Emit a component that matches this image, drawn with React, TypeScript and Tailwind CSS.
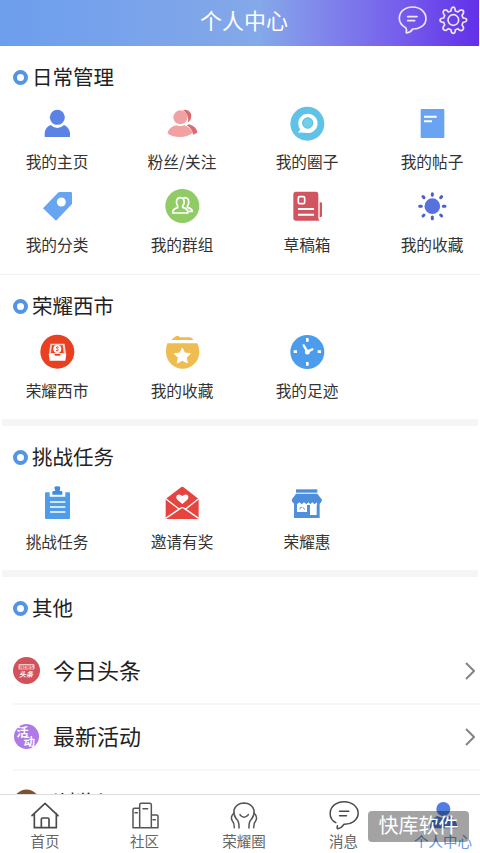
import type { ReactNode } from "react";

type Item = { label: string; icon: ReactNode };

function Icon({ box, children }: { box: string; children: ReactNode }) {
  return (
    <svg viewBox={box} className="block h-9 w-9 shrink-0 overflow-visible" fill="none">
      {children}
    </svg>
  );
}

const daily: Item[] = [
  {
    label: "我的主页",
    icon: (
      <Icon box="117 30 108 108">
        <g fill="#5b83e6">
          <circle cx="172" cy="67" r="22.5" />
          <path d="M134 126V113Q136 97 152 90Q161 99 172 99T192 90Q207 97 210 113V126Z" />
        </g>
      </Icon>
    ),
  },
  {
    label: "粉丝/关注",
    icon: (
      <Icon box="492 30 108 108">
        <g fill="#dc6a6e">
          <path d="M549 45Q566 42 573 56Q577 72 564 82Q567 58 549 45Z" />
          <path d="M568 88Q590 95 592 113L579 119Q577 101 560 91Z" />
        </g>
        <g fill="#f0a2a2">
          <ellipse cx="541" cy="67" rx="21" ry="21" />
          <path d="M502 114Q508 96 529 91Q541 96 553 91Q571 97 578 113Q562 126 540 126Q514 126 502 114Z" />
        </g>
      </Icon>
    ),
  },
  {
    label: "我的圈子",
    icon: (
      <Icon box="147 30 108 108">
        <circle cx="202" cy="86" r="51" fill="#60c2e8" />
        <path d="M174 113L181 103A29 29 0 1 1 203 114Q190 112 174 113Z" fill="#fff" />
        <circle cx="203" cy="84" r="17" fill="#72cdec" />
        <circle cx="203" cy="84" r="15" stroke="#59b9e0" strokeWidth="2" />
      </Icon>
    ),
  },
  {
    label: "我的帖子",
    icon: (
      <Icon box="522 30 108 108">
        <rect x="542" y="42" width="71" height="87" rx="3" fill="#6aa3f1" />
        <path d="M552 65H590M552 79H576" stroke="#fff" strokeWidth="6" />
      </Icon>
    ),
  },
  {
    label: "我的分类",
    icon: (
      <Icon box="117 280 108 108">
        <path d="M129 341L174 294Q176 292 180 292H213Q216 292 216 295V328L168 378Z" fill="#67a5f2" />
        <circle cx="184" cy="322" r="13.5" fill="#fff" />
      </Icon>
    ),
  },
  {
    label: "我的群组",
    icon: (
      <Icon box="492 280 108 108">
        <circle cx="547" cy="334" r="51" fill="#91cb66" />
        <g stroke="#fff" strokeWidth="5" strokeLinejoin="round" strokeLinecap="round">
          <path d="M533 334Q527 326 530 317Q533 309 541 309T552 317Q555 327 548 334V338Q565 343 564 355H518Q517 343 533 339Z" />
          <path d="M551 311Q557 306 564 313Q569 326 562 334V338Q577 342 577 350H568" />
        </g>
      </Icon>
    ),
  },
  {
    label: "草稿箱",
    icon: (
      <Icon box="147 280 108 108">
        <path d="M168 291H228Q235 291 235 298V371L238 378H168Q160 378 160 370V299Q160 291 168 291Z" fill="#d05560" />
        <path d="M239 323H242Q246 323 246 327V363Q246 368 239 368Z" fill="#d05560" />
        <rect x="175" y="306" width="19" height="21" rx="4" stroke="#fff" strokeWidth="5" />
        <path d="M174 343H222M174 360H222" stroke="#fff" strokeWidth="6" />
      </Icon>
    ),
  },
  {
    label: "我的收藏",
    icon: (
      <Icon box="522 280 108 108">
        <circle cx="577" cy="334.500" r="23.500" fill="#5572df" />
        <path
          d="M577 297V302M577 367V372M539 335H544M610 335H615M549 306L552 309M602 361L605 364M549 364L552 361M602 309L605 306"
          stroke="#4a5ed0"
          strokeWidth="9"
          strokeLinecap="round"
        />
      </Icon>
    ),
  },
];

const market: Item[] = [
  {
    label: "荣耀西市",
    icon: (
      <Icon box="117 222 108 108">
        <circle cx="172" cy="275" r="51" fill="#e84020" />
        <path d="M151 251H194L198 282H147Z" fill="#f9d2c5" />
        <path d="M156 256H188L191 279H153Z" fill="#e84020" />
        <path d="M146 281H162L166 287H179L183 281H199L196 302H149Z" fill="#fff" />
        <circle cx="172" cy="267" r="12" fill="#fff" />
        <path d="M176 262Q170 258 169 264L175 269Q175 274 168 272" stroke="#e84020" strokeWidth="3" />
      </Icon>
    ),
  },
  {
    label: "我的收藏",
    icon: (
      <Icon box="492 222 108 108">
        <path d="M514 240Q520 233 529 228H536L539 232H570Q577 234 581 240Z" fill="#eebc50" />
        <path d="M502 250H592Q598 262 598 276A50 50 0 0 1 498 276Q497 262 502 250Z" fill="#eebc50" />
        <path
          d="M547 264L554 279L571 281L559 293L562 309L547 301L532 309L535 293L523 281L540 279Z"
          fill="#fff"
          stroke="#fff"
          strokeWidth="3"
          strokeLinejoin="round"
        />
      </Icon>
    ),
  },
  {
    label: "我的足迹",
    icon: (
      <Icon box="147 132 108 108">
        <circle cx="202" cy="186" r="51" fill="#4b9cec" />
        <path d="M202 144V155M202 216V227M161 185H171M233 185H243" stroke="#fff" strokeWidth="8" />
        <path d="M191 166L202 185L217 178" stroke="#fff" strokeWidth="7" strokeLinecap="round" />
        <circle cx="202" cy="186" r="7.500" fill="#fff" />
      </Icon>
    ),
  },
];

const tasks: Item[] = [
  {
    label: "挑战任务",
    icon: (
      <Icon box="117 165 108 108">
        <path d="M138 187H149V200H196V187H207Q210 187 210 190V264Q210 267 207 267H138Q135 267 135 264V190Q135 187 138 187Z" fill="#4f9dea" />
        <path d="M163 173Q163 169 172 169T181 173L179 183H184Q187 183 187 187V194H157V187Q157 183 160 183H166Z" fill="#3f8de0" />
        <path d="M150 216H196M150 231H196M150 246H196" stroke="#fff" strokeWidth="5" />
      </Icon>
    ),
  },
  {
    label: "邀请有奖",
    icon: (
      <Icon box="492 165 108 108">
        <path d="M497 207L544 171Q547 169 550 171L596 207V267H497Z" fill="#e5443f" />
        <path d="M497 206L538 238M596 206L556 238M497 265L540 236Q547 230 554 236L596 265" stroke="#fff" strokeWidth="4" />
        <path d="M547 222L532 209Q526 203 531 196Q539 190 547 198Q556 190 563 196Q568 203 562 209Z" fill="#fff" />
      </Icon>
    ),
  },
  {
    label: "荣耀惠",
    icon: (
      <Icon box="147 45 108 108">
        <rect x="168" y="58" width="64" height="10" fill="#4c8ddc" />
        <path d="M168 71H232L246 89Q245 99 235 102H166Q156 99 155 89Z" fill="#4c8ddc" />
        <path d="M162 98H239V144H162Z" fill="#5290dc" />
        <path d="M171 103L178 97L185 103L192 97L199 103L205 97L211 103L217 97L224 103L231 97V105H230V135H210V105H201V126H171Z" fill="#fff" />
        <path d="M179 118Q183 107 186 113M190 112L194 119" stroke="#719ccc" strokeWidth="3" />
      </Icon>
    ),
  },
];

function Heading({ children }: { children: string }) {
  return (
    <h2 className="flex h-[59px] items-center pt-[4px] pl-[13px] text-[20.5px] text-[#222]">
      <span className="mr-[4px] h-[15px] w-[15px] rounded-full border-4 border-[#5395e5]" />
      <span className="-mt-[3px] leading-6">{children}</span>
    </h2>
  );
}

function Grid({ items }: { items: Item[] }) {
  return (
    <div className="grid grid-cols-[repeat(4,74px)] gap-x-[51px] gap-y-[14px] pl-5">
      {items.map((item, i) => (
        <div key={i} className="flex h-[69px] flex-col items-center whitespace-nowrap">
          {item.icon}
          <span className="mt-[9px] text-[15.7px] leading-6 text-[#333]">{item.label}</span>
        </div>
      ))}
    </div>
  );
}

function Band() {
  return <div className="mx-[2px] h-[7px] shrink-0 bg-[#f5f5f5]" />;
}

function Row({ label, icon }: { label: string; icon: ReactNode }) {
  return (
    <div className="ml-[13px] flex h-[66px] items-center border-b-2 border-[#f7f7f7] text-[22px] text-[#222]">
      {icon}
      <span className="-mt-[3px] ml-[13px] flex-1 leading-8">{label}</span>
      <svg viewBox="0 0 10 18" className="mr-[5px] h-[18px] w-[10px]" fill="none">
        <path d="M1 1L9 9L1 17" stroke="#858585" strokeWidth="2" />
      </svg>
    </div>
  );
}

const tabs: Item[] = [
  {
    label: "首页",
    icon: (
      <Icon box="81 111 108 108">
        <g stroke="#4a4a4a" strokeWidth="5" strokeLinejoin="round" strokeLinecap="round">
          <path d="M96 167L135 130L174 167M103 161V203H169V161" />
          <path d="M124 202V178Q124 174 128 174H143Q147 174 147 178V202" />
        </g>
      </Icon>
    ),
  },
  {
    label: "社区",
    icon: (
      <Icon box="380 111 108 108">
        <g stroke="#555" strokeWidth="4.500" strokeLinejoin="round" strokeLinecap="round">
          <path d="M418 203H398V149Q398 145 402 145H418M418 203V135Q418 130 423 130H448Q453 130 453 135V203ZM453 165H469Q473 165 473 169V203H453" />
          <path d="M428 146H442M404 158H411M458 179H465" />
        </g>
      </Icon>
    ),
  },
  {
    label: "荣耀圈",
    icon: (
      <Icon box="-42 111 108 108">
        <g stroke="#555" strokeWidth="4.500" strokeLinejoin="round" strokeLinecap="round">
          <path d="M-12 175Q-20 164 -18 150Q-11 130 12 129Q35 130 42 150Q44 164 36 175" />
          <path d="M0 164Q12 179 25 164" />
          <path d="M-19 160Q-29 170 -24 181Q-17 189 -17 203M-12 176Q-2 183 -3 204" />
          <path d="M43 160Q53 170 48 181Q41 189 41 203M36 176Q26 183 27 204" />
        </g>
      </Icon>
    ),
  },
  {
    label: "消息",
    icon: (
      <Icon box="256.500 111 108 108">
        <g stroke="#4a4a4a" strokeWidth="4.500" strokeLinejoin="round" strokeLinecap="round">
          <path d="M286 188Q269 179 269 161C269 139 288 125 311 125S353 140 353 160C353 181 331 194 310 193Q303 204 292 206Q289 206 290 201L291 197" />
          <path d="M297 154H325M297 167H318" />
        </g>
      </Icon>
    ),
  },
  {
    label: "个人中心",
    icon: (
      <Icon box="555 111 108 108">
        <g fill="#517de3">
          <circle cx="610" cy="147" r="21" />
          <path d="M570 205Q571 176 592 168Q610 178 628 168Q651 178 653 205Z" />
        </g>
      </Icon>
    ),
  },
];

export default function App() {
  return (
    <div className="relative flex h-[853px] w-[480px] flex-col overflow-hidden bg-white font-['Noto_Sans_CJK_SC',sans-serif]">
      <header className="mr-px flex h-[46px] shrink-0 items-center bg-[linear-gradient(90deg,#6d9eed_0%,#82a7e9_48%,#84a9e9_54%,#8087eb_67%,#765fec_83%,#6230e8_100%)] pb-[6px]">
        <h1 className="-mt-[2px] ml-[200px] w-[88px] text-[22px] leading-8 text-white">个人中心</h1>
        <svg viewBox="474 15 88 90" className="ml-[110px] h-[30px] w-[29.300px]" fill="none">
          <g stroke="#f0e6ff" strokeWidth="5" strokeLinecap="round" strokeLinejoin="round">
            <path d="M497 83Q478 74 478 55C478 35 495 21 518 21S558 36 558 56C558 77 535 88 518 87Q512 97 500 99Q497 98 500 91Z" />
            <path d="M503 50H531M503 62H524" />
          </g>
        </svg>
        <svg viewBox="598 15 86 90" className="ml-[12px] h-[30px] w-[28.700px]" fill="none">
          <g stroke="#f0e6ff" strokeWidth="5" strokeLinejoin="round">
            <path d="M634 33Q634 22 641 21Q647 22 647 33L655 36Q662 26 670 31Q675 38 667 46L670 54Q681 54 681 60Q680 67 670 67L667 75Q675 84 669 90Q662 95 655 86L647 89Q647 99 641 100Q634 99 634 89L626 86Q618 95 612 89Q607 83 615 75L612 67Q601 67 601 60Q602 54 612 54L615 46Q607 38 613 31Q620 27 626 36Z" />
            <circle cx="641" cy="60" r="16" />
          </g>
        </svg>
      </header>

      <main className="flex h-[748px] shrink-0 flex-col overflow-hidden">
        <section className="h-[229px] shrink-0 border-b border-[#f2f2f2]">
          <Heading>日常管理</Heading>
          <Grid items={daily} />
        </section>
        <section className="h-[144px] shrink-0">
          <Heading>荣耀西市</Heading>
          <Grid items={market} />
        </section>
        <Band />
        <section className="h-[144px] shrink-0">
          <Heading>挑战任务</Heading>
          <Grid items={tasks} />
        </section>
        <Band />
        <section className="shrink-0">
          <Heading>其他</Heading>
          <div className="pt-[2.500px]">
            <Row
              label="今日头条"
              icon={
                <svg viewBox="0 0 27 27" className="h-[27px] w-[27px]">
                  <circle cx="13.500" cy="13.500" r="13.500" fill="#d2515a" />
                  <rect x="5.500" y="7" width="16" height="5.500" rx="1" fill="#f4c4c7" />
                  <text x="13.500" y="11.500" textAnchor="middle" fontSize="4.500" fontWeight="700" fill="#d2515a">NEWS</text>
                  <text x="13" y="19.500" textAnchor="middle" fontSize="7" fontWeight="700" fontStyle="italic" fill="#fff">头条</text>
                </svg>
              }
            />
            <Row
              label="最新活动"
              icon={
                <svg viewBox="0 0 27 27" className="h-[27px] w-[27px]">
                  <circle cx="13.500" cy="13.500" r="12.500" fill="#ad7ae8" />
                  <text x="3.500" y="14" fontSize="12" fontWeight="700" fill="#fff">活</text>
                  <text x="10.500" y="22.500" fontSize="11.500" fontWeight="700" fill="#fff">动</text>
                </svg>
              }
            />
            <Row
              label="浏览记录"
              icon={
                <svg viewBox="0 0 27 27" className="h-[27px] w-[27px]">
                  <circle cx="13.500" cy="13.500" r="13" fill="#80512e" />
                </svg>
              }
            />
          </div>
        </section>
      </main>

      <nav className="grid h-[59px] shrink-0 grid-cols-[repeat(5,60px)] gap-x-[39.500px] border-t border-[#dcdcdc] pt-[2px] pl-[15px]">
        {tabs.map((tab, i) => (
          <div key={tab.label} className="flex flex-col items-center whitespace-nowrap">
            {tab.icon}
            <span className={i === 4 ? "-mt-[2px] text-[14.500px] leading-5 text-[#6c9ae0]" : "-mt-[2px] text-[14.500px] leading-5 text-[#666]"}>
              {tab.label}
            </span>
          </div>
        ))}
      </nav>

      <div className="absolute top-[811px] left-[368px] flex h-[31px] w-[101px] items-center justify-center rounded-[4px] bg-black/36 pb-[3px] text-[20px] text-white">
        快库软件
      </div>
    </div>
  );
}
